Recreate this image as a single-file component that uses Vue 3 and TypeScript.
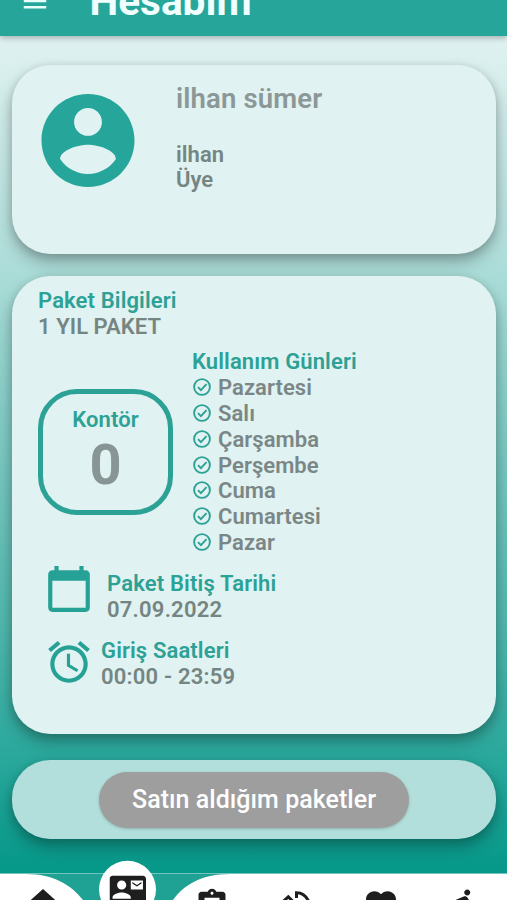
<script setup lang="ts">
const days: string[] = ['Pazartesi', 'Salı', 'Çarşamba', 'Perşembe', 'Cuma', 'Cumartesi', 'Pazar']
</script>

<template>
  <div class="screen">
    <header class="bar">
      <svg class="menu" viewBox="0 0 24 24"><path d="M3 18h18v-2H3v2zm0-5h18v-2H3v2zm0-7v2h18V6H3z" /></svg>
      <h1>Hesabım</h1>
    </header>

    <main class="content">
      <section class="card profile">
        <svg class="avatar" viewBox="2 2 20 20"><path d="M12 2C6.48 2 2 6.48 2 12s4.48 10 10 10 10-4.48 10-10S17.52 2 12 2zm0 3c1.66 0 3 1.34 3 3s-1.34 3-3 3-3-1.34-3-3 1.34-3 3-3zm0 14.2c-2.5 0-4.71-1.28-6-3.22.03-1.99 4-3.08 6-3.08 1.99 0 5.97 1.09 6 3.08-1.29 1.94-3.5 3.22-6 3.22z" /></svg>
        <div class="who">
          <h2>ilhan sümer</h2>
          <p>ilhan</p>
          <p>Üye</p>
        </div>
      </section>

      <section class="card package">
        <h3>Paket Bilgileri</h3>
        <p>1 YIL PAKET</p>
        <div class="usage">
          <div class="credit">
            <h3>Kontör</h3>
            <strong>0</strong>
          </div>
          <div class="days">
            <h3>Kullanım Günleri</h3>
            <ul>
              <li v-for="day in days" :key="day">
                <svg viewBox="0 0 20 20"><circle cx="10" cy="10" r="7.9" /><path d="M6 10.2l2.9 2.9 5.6-6" /></svg>
                <span>{{ day }}</span>
              </li>
            </ul>
          </div>
        </div>
        <div class="info end-date">
          <svg viewBox="0 0 24 24"><path d="M20 3h-1V1h-2v2H7V1H5v2H4c-1.1 0-2 .9-2 2v16c0 1.1.9 2 2 2h16c1.1 0 2-.9 2-2V5c0-1.1-.9-2-2-2zm0 18H4V8h16v13z" /></svg>
          <div>
            <h3>Paket Bitiş Tarihi</h3>
            <p class="date">07.09.2022</p>
          </div>
        </div>
        <div class="info hours">
          <svg viewBox="0 0 24 24"><path d="M22 5.72l-4.6-3.86-1.29 1.53 4.6 3.86L22 5.72zM7.88 3.39L6.6 1.86 2 5.71l1.29 1.53 4.59-3.85zM12.5 8H11v6l4.75 2.85.75-1.23-4-2.37V8zM12 4c-4.97 0-9 4.03-9 9s4.02 9 9 9c4.97 0 9-4.03 9-9s-4.03-9-9-9zm0 16c-3.87 0-7-3.13-7-7s3.13-7 7-7 7 3.13 7 7-3.13 7-7 7z" /></svg>
          <div>
            <h3>Giriş Saatleri</h3>
            <p class="time">00:00 - 23:59</p>
          </div>
        </div>
      </section>

      <section class="card purchases">
        <button type="button">Satın aldığım paketler</button>
      </section>
    </main>

    <nav class="tabs">
      <svg class="tabs-art" viewBox="0 0 507 42">
        <rect y="15.5" width="507" height="26.5" class="notch" />
        <path class="sheet" d="M0 16H26C54 16 71 27 83 42H0zM507 16H230C201 16 184 27 173 42H507z" />
        <path class="edge" d="M0 15.5H507" />
        <circle class="sheet" cx="127.5" cy="31.3" r="28.5" />
        <svg x="25" y="26.5" width="36" height="36" viewBox="0 0 24 24"><path d="M10 20v-6h4v6h5v-8h3L12 3 2 12h3v8z" /></svg>
        <svg x="109.5" y="13.3" width="36.5" height="36.5" viewBox="0 0 24 24"><path d="M21 8V7l-3 2-3-2v1l3 2 3-2zm1-5H2C.9 3 0 3.9 0 5v14c0 1.1.9 2 2 2h20c1.1 0 1.99-.9 1.99-2L24 5c0-1.1-.9-2-2-2zM8 6c1.66 0 3 1.34 3 3s-1.34 3-3 3-3-1.34-3-3 1.34-3 3-3zm6 12H2v-1c0-2 4-3.1 6-3.1s6 1.1 6 3.1v1zm8-6h-8V6h8v6z" /></svg>
        <svg x="194" y="29.3" width="36" height="36" viewBox="0 0 24 24"><path d="M19 3h-4.18C14.4 1.84 13.3 1 12 1c-1.3 0-2.4.84-2.82 2H5c-1.1 0-2 .9-2 2v14c0 1.1.9 2 2 2h14c1.1 0 2-.9 2-2V5c0-1.1-.9-2-2-2zm-7 0c.55 0 1 .45 1 1s-.45 1-1 1-1-.45-1-1 .45-1 1-1zm2 14H7v-2h7v2zm3-4H7v-2h10v2zm0-4H7V7h10v2z" /></svg>
        <path class="turn" d="M281.5 45L288.3 38.8L294.5 45M296.5 40V34.8C302.5 34.8 306 37.8 308.5 43" />
        <svg x="363" y="28.7" width="36" height="36" viewBox="0 0 24 24"><path d="M12 21.35l-1.45-1.32C5.4 15.36 2 12.28 2 8.5 2 5.42 4.42 3 7.5 3c1.74 0 3.41.81 4.5 2.09C13.09 3.81 14.76 3 16.5 3 19.58 3 22 5.42 22 8.5c0 3.78-3.4 6.86-8.55 11.54L12 21.35z" /></svg>
        <svg x="447" y="29.3" width="36" height="36" viewBox="0 0 24 24"><path d="M13.49 5.48c1.1 0 2-.9 2-2s-.9-2-2-2-2 .9-2 2 .9 2 2 2zm-3.6 13.9l1-4.4 2.1 2v6h2v-7.5l-2.1-2 .6-3c1.3 1.5 3.3 2.5 5.5 2.5v-2c-1.9 0-3.5-1-4.3-2.4l-1-1.6c-.4-.6-1-1-1.7-1-.3 0-.5.1-.8.1l-5.2 2.2v4.7h2v-3.4l1.8-.7-1.6 8.1-4.9-1-.4 2 7 1.4z" /></svg>
      </svg>
    </nav>
  </div>
</template>

<style>
body { margin: 0; }
</style>

<style scoped>
.screen {
  width: 507px;
  height: 900px;
  overflow: hidden;
  display: flex;
  flex-direction: column;
  font-family: Roboto, "Noto Sans", sans-serif;
  background: linear-gradient(180deg, #e0f2f1 36px, #b2dfdb 246px, #80cbc4 430px, #4db6ac 640px, #26a69a 770px, #069889 868px);
}
h1, h2, h3, p, ul { margin: 0; padding: 0; }
.bar {
  height: 36px;
  flex: none;
  display: flex;
  align-items: flex-end;
  background: #26a69a;
  box-shadow: 0 2px 6px rgba(0, 0, 0, .28);
}
.menu { width: 30px; height: 30px; margin: 0 0 20px 20px; fill: #e9fffb; }
h1 { margin: 0 0 11px 39.5px; color: #f0fffd; font-size: 40.6px; line-height: 47px; font-weight: 700; }
.content {
  flex: 1;
  display: flex;
  flex-direction: column;
  padding: 29px 11px 0 12px;
}
.card { background: #e0f2f1; border-radius: 38px; box-shadow: 0 8px 16px rgba(0, 0, 0, .27), 0 2px 8px rgba(0, 0, 0, .12); box-sizing: border-box; }
.profile { height: 189px; display: flex; padding: 29px; gap: 41px; }
.avatar { width: 94px; height: 93px; fill: #26a69a; }
.who h2 { margin-top: -11px; padding: 0 0 26.5px; color: #8b9897; font-size: 27.5px; line-height: 32px; letter-spacing: .15px; font-weight: 600; }
h3 { color: #2ca195; font-size: 22px; line-height: 25.75px; letter-spacing: .13px; font-weight: 600; white-space: nowrap; }
p { color: #758582; font-size: 22px; line-height: 25.75px; letter-spacing: .06px; font-weight: 600; white-space: nowrap; }
.package { height: 458px; margin-top: 22px; padding: 12px 26px 0; }
.usage { display: flex; align-items: center; gap: 19px; margin-top: 9.5px; }
.credit {
  width: 135px;
  height: 126px;
  margin-top: -1px;
  box-sizing: border-box;
  border: 5px solid #2ca195;
  border-radius: 39px;
  text-align: center;
  padding-top: 13px;
}
.credit strong { display: block; color: #879594; font-size: 56px; line-height: 66px; font-weight: 700; }
ul { list-style: none; }
li { display: flex; align-items: center; gap: 6px; height: 25.8px; color: #7b8786; font-size: 22px; letter-spacing: .06px; font-weight: 600; }
li svg { width: 20px; height: 20px; margin: -1px 0 0 -.5px; fill: none; stroke: #2ca195; stroke-width: 1.9; }
li span { margin-left: .5px; }
.info { display: flex; align-items: flex-start; }
.info svg { width: 50px; height: 50px; flex: none; fill: #26a195; }
.end-date { margin: 9px 0 0 6px; gap: 13px; }
.end-date > div { padding-top: 6.5px; }
.date, .time { letter-spacing: .22px; }
.end-date .date { margin-top: .25px; }
.end-date h3 { letter-spacing: .17px; }
.hours { margin: 14px 0 0 6px; gap: 7px; }
.hours > div { padding-top: 1px; }
.hours .time { margin-top: 1px; }
.purchases { height: 79px; margin-top: 26px; display: flex; align-items: center; justify-content: center; background: #b2dfdb; }
button {
  width: 310px;
  height: 56px;
  border: 0;
  border-radius: 28px;
  background: #9e9e9e;
  color: #fff;
  font: 500 25px/30px Roboto, sans-serif;
  letter-spacing: .03px;
  box-shadow: 0 1px 3px rgba(0, 0, 0, .2);
}
.tabs { height: 42px; flex: none; }
.tabs-art { display: block; width: 507px; height: 42px; fill: #1e1e1e; }
.notch { fill: #1fa294; }
.sheet { fill: #fff; }
.edge { stroke: #72c5bd; stroke-width: 1; fill: none; }
.turn { fill: none; stroke: #1e1e1e; stroke-width: 3; }
</style>
